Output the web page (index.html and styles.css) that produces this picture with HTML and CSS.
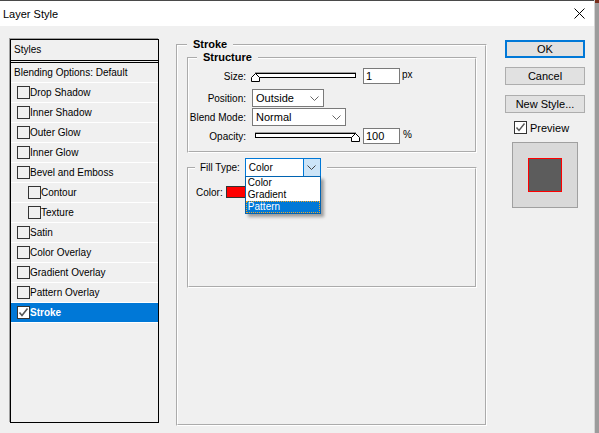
FILE: index.html
```html
<!DOCTYPE html>
<html lang="en">
<head>
  <meta charset="UTF-8" />
  <title>Layer Style</title>
  <link rel="stylesheet" href="styles.css">
</head>
<body>
<div class="screen">
  <div class="dialog">
    <div class="titlebar">
      <span class="title">Layer Style</span>
      <svg class="close" width="11" height="11" viewBox="0 0 11 11">
        <path d="M0.5 0.5 L10.5 10.5 M10.5 0.5 L0.5 10.5" stroke="#000" stroke-width="1" fill="none"/>
      </svg>
    </div>

    <div class="content">
      <!-- Список стилей -->
      <div class="styles-list">
        <div class="styles-head">Styles</div>
        <div class="style-row plain">Blending Options: Default</div>
        <div class="style-row"><span class="check"></span>Drop Shadow</div>
        <div class="style-row"><span class="check"></span>Inner Shadow</div>
        <div class="style-row"><span class="check"></span>Outer Glow</div>
        <div class="style-row"><span class="check"></span>Inner Glow</div>
        <div class="style-row"><span class="check"></span>Bevel and Emboss</div>
        <div class="style-row sub"><span class="check"></span>Contour</div>
        <div class="style-row sub"><span class="check"></span>Texture</div>
        <div class="style-row"><span class="check"></span>Satin</div>
        <div class="style-row"><span class="check"></span>Color Overlay</div>
        <div class="style-row"><span class="check"></span>Gradient Overlay</div>
        <div class="style-row"><span class="check"></span>Pattern Overlay</div>
        <div class="style-row active">
          <span class="check checked">
            <svg width="11" height="11" viewBox="0 0 11 11"><path d="M1.5 5.5 L4 8.5 L9.5 1.5" stroke="#555" stroke-width="1.6" fill="none"/></svg>
          </span>Stroke
        </div>
      </div>

      <!-- Панель Stroke -->
      <fieldset class="group group-stroke">
        <legend class="legend-stroke">Stroke</legend>

        <fieldset class="group group-structure">
          <legend class="legend-structure">Structure</legend>

          <div class="row row-size">
            <span class="label">Size:</span>
            <div class="slider">
              <div class="track"></div>
              <svg class="thumb" style="left: -1px" width="10" height="9" viewBox="0 0 10 9">
                <path d="M0.5 8.5 V4.5 L4.5 0.5 L8.5 4.5 V8.5 Z" fill="#fff" stroke="#000"/>
              </svg>
            </div>
            <span class="field">1</span>
            <span class="unit">px</span>
          </div>

          <div class="row row-position">
            <span class="label">Position:</span>
            <div class="select select-position">
              <span>Outside</span>
              <svg class="chev" width="9" height="5" viewBox="0 0 9 5"><path d="M0.5 0.5 L4.5 4.5 L8.5 0.5" stroke="#666" fill="none"/></svg>
            </div>
          </div>

          <div class="row row-blend">
            <span class="label">Blend Mode:</span>
            <div class="select select-blend">
              <span>Normal</span>
              <svg class="chev" width="9" height="5" viewBox="0 0 9 5"><path d="M0.5 0.5 L4.5 4.5 L8.5 0.5" stroke="#666" fill="none"/></svg>
            </div>
          </div>

          <div class="row row-opacity">
            <span class="label">Opacity:</span>
            <div class="slider">
              <div class="track"></div>
              <svg class="thumb" style="left: 99px" width="10" height="9" viewBox="0 0 10 9">
                <path d="M0.5 8.5 V4.5 L4.5 0.5 L8.5 4.5 V8.5 Z" fill="#fff" stroke="#000"/>
              </svg>
            </div>
            <span class="field">100</span>
            <span class="unit unit-pct">%</span>
          </div>
        </fieldset>

        <fieldset class="group group-fill">
          <legend class="legend-fill">
            <span class="fill-label">Fill Type:</span>
            <div class="combo">
              <span class="combo-value">Color</span>
              <span class="combo-btn">
                <svg width="9" height="5" viewBox="0 0 9 5"><path d="M0.5 0.5 L4.5 4.5 L8.5 0.5" stroke="#444" fill="none"/></svg>
              </span>
              <ul class="combo-list">
                <li>Color</li>
                <li>Gradient</li>
                <li class="selected">Pattern</li>
              </ul>
            </div>
          </legend>

          <div class="row row-color">
            <span class="color-label">Color:</span>
            <span class="swatch"></span>
          </div>
        </fieldset>
      </fieldset>

      <!-- Кнопки -->
      <div class="actions">
        <div class="btn btn-default">OK</div>
        <div class="btn btn-cancel">Cancel</div>
        <div class="btn btn-new">New Style...</div>
        <div class="preview-check">
          <span class="check checked">
            <svg width="11" height="11" viewBox="0 0 11 11"><path d="M1.5 5.5 L4 8.5 L9.5 1.5" stroke="#555" stroke-width="1.4" fill="none"/></svg>
          </span>
          <span>Preview</span>
        </div>
        <div class="preview-box">
          <div class="preview-square"></div>
        </div>
      </div>
    </div>
  </div>
  <div class="edge"></div>
</div>
</body>
</html>
```

FILE: styles.css
```css
body {
  margin: 0;
  font-family: "Liberation Sans", Arial, sans-serif;
  font-size: 10px;
  color: #000;
  background: #9a9a9a;
}
.screen {
  display: flex;
  width: 599px;
  height: 433px;
  overflow: hidden;
}
.dialog {
  width: 594px;
  height: 433px;
  border-right: 1px solid #d4d4d4;
  background: #f0f0f0;
}
.edge {
  flex: 1;
  background: #9c9c9c;
  border-top: 3px solid #7a2f1c;
}
.titlebar {
  height: 25px;
  border-top: 1px solid #4a4a4a;
  background: #fff;
  display: flex;
  align-items: center;
  justify-content: space-between;
  padding: 0 9px 0 3px;
}
.title {
  font-size: 11px;
}
.content {
  display: flex;
  align-items: flex-start;
}

/* styles list */
.styles-list {
  margin: 13px 0 0 10px;
  width: 149px;
  height: 384px;
  box-sizing: border-box;
  border: 1px solid #000;
  box-shadow: -1px -1px 0 #a0a0a0;
}
.styles-head {
  height: 20px;
  line-height: 20px;
  padding-left: 3px;
  border-bottom: 3px double #000;
}
.style-row {
  height: 19px;
  border-bottom: 1px solid #fff;
  display: flex;
  align-items: center;
  padding-left: 6px;
  white-space: nowrap;
}
.style-row.plain {
  padding-left: 3px;
}
.style-row.sub {
  padding-left: 17px;
}
.style-row.active {
  background: #0078d7;
  color: #fff;
  font-weight: bold;
}
.check {
  width: 13px;
  height: 13px;
  box-sizing: border-box;
  border: 1px solid #333;
  flex: none;
  display: inline-flex;
  align-items: center;
  justify-content: center;
}
.check.checked {
  background: #fff;
}

/* group boxes */
fieldset.group {
  margin: 0;
  padding: 0;
  border: 2px groove #fff;
  box-sizing: border-box;
  min-width: 0;
}
legend {
  padding: 0 6px;
  line-height: 13px;
  font-weight: bold;
  font-size: 11px;
}
.group-stroke {
  margin: 12px 0 0 17px !important;
  width: 311px;
  height: 388px;
}
.legend-stroke {
  margin-left: 9px;
}
.group-structure {
  margin-left: 9px !important;
  width: 290px;
  height: 102px;
}
.legend-structure {
  margin-left: 8px;
}
.group-fill {
  margin: 5px 0 0 9px !important;
  width: 290px;
  height: 130px;
}
.legend-fill {
  margin-left: 6px;
  padding: 0 6px 0 5px;
  font-weight: normal;
  font-size: 10px;
  display: flex;
  align-items: center;
}

/* rows */
.row {
  display: flex;
  align-items: center;
}
.label {
  width: 57px;
  margin-right: 6px;
  text-align: right;
  flex: none;
}
.row-size {
  margin-top: 4px;
  height: 16px;
}
.row-position {
  margin-top: 5px;
  height: 18px;
}
.row-blend {
  margin-top: 1px;
  height: 18px;
}
.row-opacity {
  margin-top: 2px;
  height: 16px;
}
.slider {
  position: relative;
  width: 105px;
  height: 16px;
}
.track {
  margin: 5px 0 0 3px;
  width: 101px;
  height: 5px;
  box-sizing: border-box;
  border: 1px solid #000;
  background: #fff;
  box-shadow: 0 -1px 0 #a0a0a0;
}
.thumb {
  position: absolute;
  top: 5px;
}
.field {
  margin-left: 6px;
  width: 37px;
  height: 16px;
  box-sizing: border-box;
  border: 1px solid #7a7a7a;
  background: #fff;
  padding-left: 2px;
  font-size: 11px;
  line-height: 14px;
}
.unit {
  margin-left: 2px;
  align-self: flex-start;
  line-height: 14px;
}
.unit-pct {
  margin-left: 3px;
}
.select {
  height: 18px;
  box-sizing: border-box;
  border: 1px solid #7a7a7a;
  background: #fff;
  display: flex;
  align-items: center;
  justify-content: space-between;
  padding: 0 4px 0 3px;
  font-size: 11px;
}
.select-position {
  width: 72px;
}
.select-blend {
  width: 94px;
}

/* fill type combo */
.fill-label {
  margin-right: 5px;
}
.combo {
  position: relative;
  width: 76px;
  height: 19px;
  box-sizing: border-box;
  border: 1px solid #0078d7;
  background: #fff;
  display: flex;
  font-size: 10px;
}
.combo-value {
  flex: 1;
  padding-left: 3px;
  line-height: 17px;
}
.combo-btn {
  width: 16px;
  background: #cce4f7;
  border-left: 1px solid #0078d7;
  display: flex;
  align-items: center;
  justify-content: center;
}
.combo-list {
  position: absolute;
  top: 17px;
  left: -1px;
  width: 76px;
  margin: 0;
  padding: 0;
  list-style: none;
  box-sizing: border-box;
  border: 1px solid #0063b1;
  background: #fff;
  box-shadow: 3px 3px 3px rgba(0, 0, 0, 0.35);
}
.combo-list li {
  height: 12px;
  line-height: 12px;
  padding-left: 2px;
}
.combo-list li.selected {
  background: #0078d7;
  color: #fff;
  outline: 1px dotted #f5a623;
  outline-offset: -1px;
}
.row-color {
  margin: 9px 0 0 7px;
  height: 12px;
}
.swatch {
  margin-left: 3px;
  width: 30px;
  height: 12px;
  box-sizing: border-box;
  border: 1px solid #333;
  background: #ff0000;
}

/* buttons */
.actions {
  margin: 14px 0 0 18px;
  width: 80px;
}
.btn {
  height: 18px;
  box-sizing: border-box;
  border: 1px solid #adadad;
  background: #e1e1e1;
  font-size: 11px;
  line-height: 16px;
  text-align: center;
}
.btn-default {
  border: 2px solid #0078d7;
  line-height: 14px;
}
.btn-cancel {
  margin-top: 9px;
}
.btn-new {
  margin-top: 10px;
}
.preview-check {
  margin: 8px 0 0 9px;
  height: 13px;
  display: flex;
  align-items: center;
  gap: 3px;
  font-size: 11px;
}
.preview-box {
  margin: 8px 0 0 7px;
  width: 66px;
  height: 66px;
  box-sizing: border-box;
  border: 1px solid #a0a0a0;
  background: #d9d9d9;
  display: flex;
  align-items: center;
  justify-content: center;
}
.preview-square {
  width: 34px;
  height: 34px;
  box-sizing: border-box;
  border: 1px solid #ff0000;
  background: #5c5c5c;
}
```
